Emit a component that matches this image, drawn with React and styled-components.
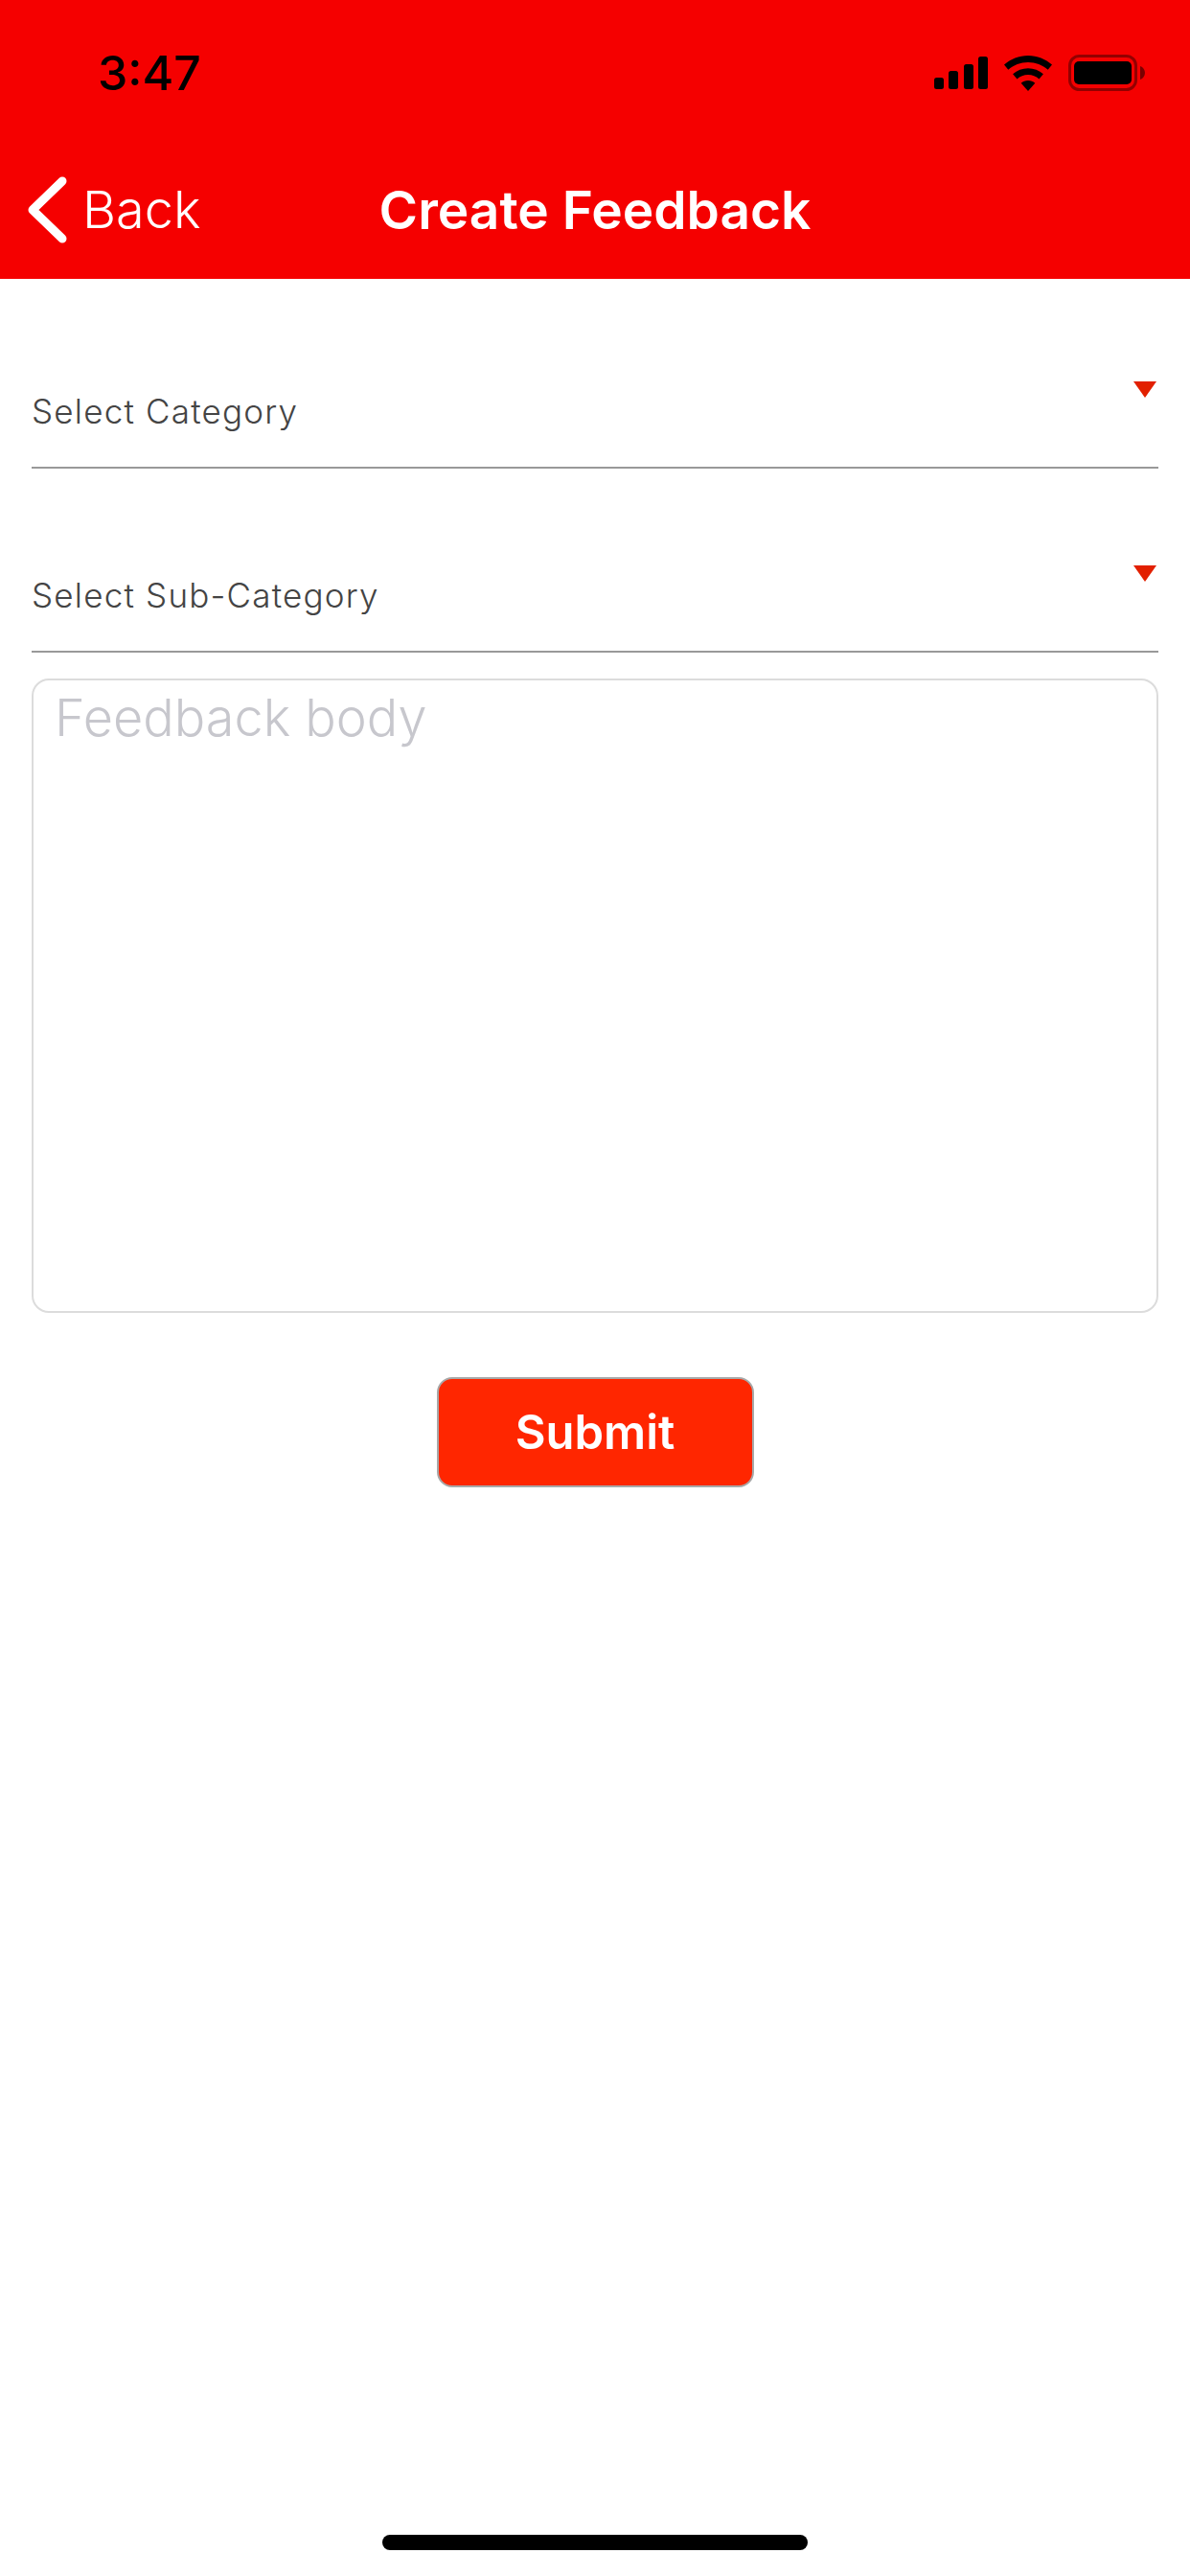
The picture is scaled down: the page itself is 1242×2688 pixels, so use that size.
import React from 'react';
import styled, { createGlobalStyle } from 'styled-components';

const Global = createGlobalStyle`
  html, body {
    margin: 0;
    padding: 0;
    background: #fff;
    font-family: Inter, "Liberation Sans", sans-serif;
  }
  * { box-sizing: border-box; }
`;

const Screen = styled.div`
  width: 1242px;
  height: 2688px;
  display: flex;
  flex-direction: column;
  background: #fff;
`;

const Header = styled.header`
  height: 291px;
  background: #f50000;
  display: flex;
  flex-direction: column;
`;

const StatusBar = styled.div`
  height: 132px;
  padding: 20px 47px 0 102px;
  display: flex;
  align-items: center;
  justify-content: space-between;
`;

const Time = styled.span`
  font-size: 50px;
  font-weight: 500;
  line-height: 56px;
  color: #000;
`;

const StatusIcons = styled.div`
  display: flex;
  align-items: center;
  gap: 17px;
`;

const NavBar = styled.nav`
  flex: 1;
  display: grid;
  grid-template-columns: 1fr auto 1fr;
  align-items: center;
  padding: 14px 29px 0;
`;

const BackLink = styled.a`
  display: flex;
  align-items: center;
  gap: 15px;
  color: #fff;
  font-size: 54px;
  font-weight: 300;
  line-height: 70px;
`;

const Title = styled.h1`
  margin: 0;
  color: #fff;
  font-size: 55px;
  font-weight: 600;
  line-height: 70px;
`;

const Form = styled.form`
  padding: 0 33px;
  display: flex;
  flex-direction: column;
`;

const SelectRow = styled.div`
  height: 192px;
  padding: 101px 2px 0 0;
  border-bottom: 2px solid #999;
  display: flex;
  justify-content: space-between;
  align-items: flex-start;
  margin-top: ${p => (p.$first ? '6px' : '0')};
`;

const SelectLabel = styled.span`
  margin-top: 10px;
  font-size: 35px;
  line-height: 42px;
  letter-spacing: 1.2px;
  color: #444;
  font-weight: 300;
`;

const Arrow = styled.span`
  width: 0;
  height: 0;
  border-left: 12px solid transparent;
  border-right: 12px solid transparent;
  border-top: 17px solid #e22000;
`;

const Body = styled.textarea`
  display: block;
  margin-top: 27px;
  height: 662px;
  width: 100%;
  padding: 6px 22px;
  border: 2px solid #dcdcdc;
  border-radius: 18px;
  outline: none;
  resize: none;
  font-family: inherit;
  font-size: 54px;
  font-weight: 300;
  line-height: 66px;
  &::placeholder { color: #c7c7cd; opacity: 1; }
`;

const Submit = styled.button`
  align-self: center;
  margin-top: 67px;
  width: 331px;
  height: 115px;
  background: #ff2600;
  border: 2px solid #a8a8a8;
  border-radius: 16px;
  color: #fff;
  font-family: inherit;
  font-size: 49px;
  font-weight: 600;
`;

const HomeBar = styled.div`
  margin-top: auto;
  margin-bottom: 27px;
  align-self: center;
  width: 444px;
  height: 16px;
  border-radius: 8px;
  background: #000;
`;

const Signal = () => (
  <svg width="56" height="34" viewBox="0 0 56 34">
    <rect x="0" y="22" width="10" height="12" rx="2.5" />
    <rect x="15" y="15" width="10" height="19" rx="2.5" />
    <rect x="31" y="8" width="10" height="26" rx="2.5" />
    <rect x="46" y="0" width="10" height="34" rx="2.5" />
  </svg>
);

const Wifi = () => (
  <svg width="50" height="37" viewBox="0 0 50 37">
    <path d="M25 0C15.500 0 6.800 3.600 0 9.600L4.300 14.700C9.900 9.800 17.100 6.900 25 6.900S40.100 9.800 45.700 14.700L50 9.600C43.200 3.600 34.500 0 25 0Z" />
    <path d="M25 13.200C19 13.200 13.500 15.400 9.100 19.200L13.500 24.400C16.600 21.700 20.600 20.100 25 20.100S33.400 21.700 36.500 24.400L40.900 19.200C36.500 15.400 31 13.200 25 13.200Z" />
    <path d="M25 26C22.200 26 19.700 27 17.700 28.700L25 37L32.300 28.700C30.300 27 27.800 26 25 26Z" />
  </svg>
);

const Battery = () => (
  <svg width="80" height="38" viewBox="0 0 80 38">
    <rect x="1.500" y="1.500" width="69" height="35" rx="10" fill="none" stroke="#000" strokeOpacity="0.4" strokeWidth="3" />
    <rect x="6" y="7" width="60" height="24" rx="5" />
    <path d="M75 12C78 13 80 16 80 19S78 25 75 26Z" fill="#000" fillOpacity="0.5" />
  </svg>
);

const Chevron = () => (
  <svg width="42" height="70" viewBox="0 0 42 70">
    <path d="M36 5L5 35L36 65" fill="none" stroke="#fff" strokeWidth="9" strokeLinecap="round" strokeLinejoin="round" />
  </svg>
);

export default function App() {
  return (
    <Screen>
      <Global />
      <Header>
        <StatusBar>
          <Time>3:47</Time>
          <StatusIcons>
            <Signal />
            <Wifi />
            <Battery />
          </StatusIcons>
        </StatusBar>
        <NavBar>
          <BackLink>
            <Chevron />
            Back
          </BackLink>
          <Title>Create Feedback</Title>
        </NavBar>
      </Header>
      <Form>
        <SelectRow $first>
          <SelectLabel>Select Category</SelectLabel>
          <Arrow />
        </SelectRow>
        <SelectRow>
          <SelectLabel>Select Sub-Category</SelectLabel>
          <Arrow />
        </SelectRow>
        <Body placeholder="Feedback body" />
        <Submit type="button">Submit</Submit>
      </Form>
      <HomeBar />
    </Screen>
  );
}
